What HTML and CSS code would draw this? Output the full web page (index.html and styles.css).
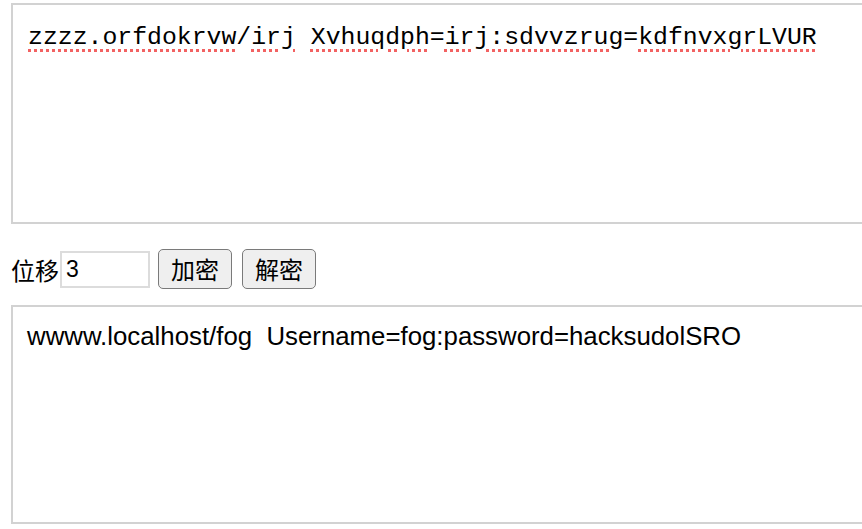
FILE: index.html
```html
<!DOCTYPE html>
<html lang="zh">
<head>
<meta charset="utf-8">
<link rel="stylesheet" href="styles.css">
</head>
<body>
<div class="page">
  <div class="box box-top"><span class="sp">zzzz.orfdokrvw</span>/<span class="sp">irj</span> <span class="sp">Xvhuqdph</span>=<span class="sp">irj:sdvvzrug</span>=<span class="sp">kdfnvxgrLVUR</span></div>
  <div class="controls">
    <label class="label">位移</label><input class="shift" type="text" value="3"><button class="btn">加密</button><button class="btn">解密</button>
  </div>
  <div class="box box-bottom">wwww.localhost/fog&nbsp; Username=fog:password=hacksudolSRO</div>
</div>
</body>
</html>
```

FILE: styles.css
```css
html, body {
  margin: 0;
  padding: 0;
  background: #fff;
  overflow: hidden;
}
.page {
  padding: 3px 0 0 11px;
  display: flex;
  flex-direction: column;
  width: 900px;
}
.box {
  box-sizing: border-box;
  width: 900px;
  border: 2px solid #d2d2d2;
  background: #fff;
  color: #000;
  white-space: pre;
}
.box-top {
  height: 221px;
  padding: 15px 0 0 15px;
  font-family: "Liberation Mono", monospace;
  font-size: 24.8px;
  line-height: 34px;
}
.sp {
  text-decoration: underline dotted rgba(240, 70, 70, 0.85);
  text-decoration-thickness: 3px;
  text-underline-offset: 5px;
}
.controls {
  display: flex;
  align-items: center;
  box-sizing: border-box;
  height: 81px;
  padding-top: 9px;
  font-family: "Noto Sans CJK SC", sans-serif;
}
.label {
  font-size: 24px;
  color: #000;
}
.shift {
  box-sizing: border-box;
  width: 90px;
  height: 37px;
  margin: 0 8px 0 1px;
  border: 2px solid #dcdcdc;
  padding: 0 4px;
  font-family: "Liberation Sans", sans-serif;
  font-size: 23px;
  color: #000;
  outline: none;
}
.btn {
  box-sizing: border-box;
  height: 40px;
  width: 74px;
  margin-right: 10px;
  border: 1.5px solid #7a7a7a;
  border-radius: 5px;
  background: #efefef;
  font-family: "Noto Sans CJK SC", sans-serif;
  font-size: 24px;
  line-height: 1;
  color: #000;
  padding: 0;
}
.box-bottom {
  height: 219px;
  padding: 12px 0 0 14px;
  font-family: "Liberation Sans", sans-serif;
  font-size: 25.8px;
  line-height: 34px;
}
```
